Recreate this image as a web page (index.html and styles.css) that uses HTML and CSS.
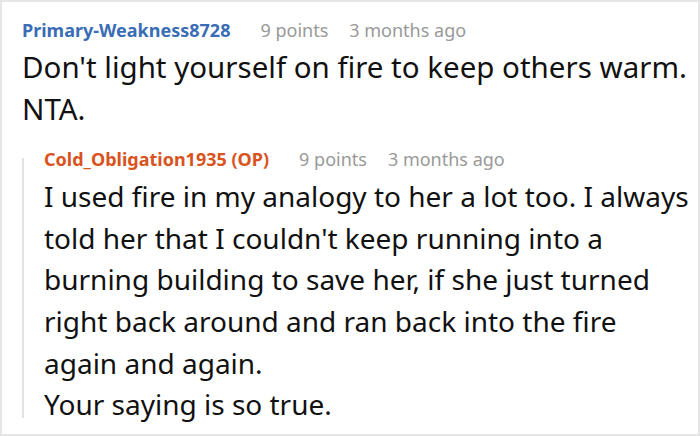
FILE: index.html
```html
<!DOCTYPE html>
<html>
<head>
<meta charset="utf-8">
<link rel="stylesheet" href="styles.css">
</head>
<body>
<div class="frame">
  <div class="comment">
    <div class="meta">
      <span class="user user-blue">Primary-Weakness8728</span>
      <span class="stat">9 points</span>
      <span class="stat">3 months ago</span>
    </div>
    <div class="body">Don't light yourself on fire to keep others warm.<br>NTA.</div>
    <div class="reply">
      <div class="meta">
        <span class="user user-orange">Cold_Obligation1935 (OP)</span>
        <span class="stat">9 points</span>
        <span class="stat">3 months ago</span>
      </div>
      <div class="body body-reply">I used fire in my analogy to her a lot too. I always told her that I couldn't keep running into a burning building to save her, if she just turned right back around and ran back into the fire again and again.<br>Your saying is so true.</div>
    </div>
  </div>
</div>
</body>
</html>
```

FILE: styles.css
```css
html, body {
  margin: 0;
  padding: 0;
  background: #ffffff;
}
.frame {
  width: 700px;
  height: 436px;
  box-sizing: border-box;
  border: 2px solid #e6e6e6;
  padding: 16px 8px 0 20px;
  font-family: "Noto Sans", "Open Sans", sans-serif;
  color: #111111;
  overflow: hidden;
}
.meta {
  display: flex;
  align-items: baseline;
  font-size: 18px;
  line-height: 24px;
}
.user {
  font-weight: bold;
  margin-right: 30px;
}
.user-blue { color: #3a6db5; }
.user-orange { color: #d9531e; }
.stat {
  color: #999999;
  margin-right: 21px;
}
.body {
  font-size: 29.5px;
  line-height: 41.6px;
  margin-top: 4px;
}
.body-reply {
  font-size: 28px;
  margin-top: 5px;
}
.reply {
  position: relative;
  margin-top: 18px;
  padding-left: 22px;
}
.reply::before {
  content: "";
  position: absolute;
  left: 0;
  top: 11px;
  bottom: 8px;
  width: 2px;
  background: #e3e3e3;
}
```
